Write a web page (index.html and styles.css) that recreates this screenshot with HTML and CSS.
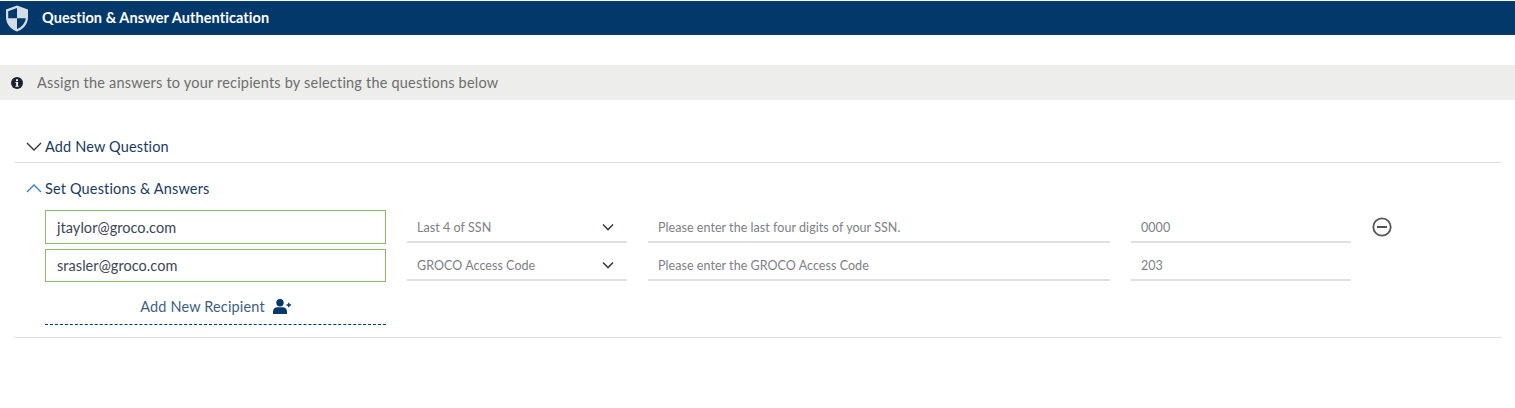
FILE: index.html
```html
<!DOCTYPE html>
<html lang="en">
<head>
  <meta charset="UTF-8" />
  <title>Question &amp; Answer Authentication</title>
  <link rel="stylesheet" href="styles.css">
</head>
<body>
  <header class="title-bar">
    <svg class="shield" viewBox="0 0 24 27" width="24" height="27">
      <path d="M12 0.500 L23 4.500 V12 C23 19 18.500 24 12 26.500 C5.500 24 1 19 1 12 V4.500 Z" fill="#d3dde8"/>
      <path d="M12 3 L3.200 6.200 V12 C3.200 12.400 3.200 12.800 3.250 13.300 H12 Z" fill="#03386b"/>
      <path d="M12 13.300 H20.750 C20.100 18.400 16.800 22 12 24 Z" fill="#03386b"/>
    </svg>
    <h1>Question &amp; Answer Authentication</h1>
  </header>

  <div class="info-bar">
    <svg class="info-icon" viewBox="0 0 12 12" width="12" height="12">
      <circle cx="6" cy="6" r="6" fill="#1c2230"/>
      <rect x="5" y="2.300" width="2" height="1.800" fill="#fff"/>
      <path d="M4.500 5 H7 V8.700 H7.800 V9.800 H4.400 V8.700 H5.200 V6.100 H4.500 Z" fill="#fff"/>
    </svg>
    <span>Assign the answers to your recipients by selecting the questions below</span>
  </div>

  <section class="accordion">
    <div class="panel">
      <div class="panel-head">
        <svg class="chevron" viewBox="0 0 16 9" width="16" height="9"><path d="M1 1 L8 8 L15 1" fill="none" stroke="#2b3038" stroke-width="1.300"/></svg>
        <span>Add New Question</span>
      </div>
    </div>

    <div class="panel open">
      <div class="panel-head">
        <svg class="chevron" viewBox="0 0 16 9" width="16" height="9"><path d="M1 8 L8 1 L15 8" fill="none" stroke="#2f7fd6" stroke-width="1.300"/></svg>
        <span>Set Questions &amp; Answers</span>
      </div>

      <div class="qa-grid">
        <div class="recipient first">jtaylor@groco.com</div>
        <div class="field select first">
          <span>Last 4 of SSN</span>
          <svg viewBox="0 0 12 8" width="12" height="8"><path d="M1 1.500 L6 6.500 L11 1.500" fill="none" stroke="#3a3f47" stroke-width="1.600"/></svg>
        </div>
        <div class="field first">Please enter the last four digits of your SSN.</div>
        <div class="field first">0000</div>
        <svg class="remove" viewBox="0 0 20 20" width="20" height="20">
          <circle cx="10" cy="10" r="8.700" fill="none" stroke="#555" stroke-width="1.800"/>
          <rect x="5" y="9" width="10" height="2" fill="#555"/>
        </svg>

        <div class="recipient">srasler@groco.com</div>
        <div class="field select">
          <span>GROCO Access Code</span>
          <svg viewBox="0 0 12 8" width="12" height="8"><path d="M1 1.500 L6 6.500 L11 1.500" fill="none" stroke="#3a3f47" stroke-width="1.600"/></svg>
        </div>
        <div class="field">Please enter the GROCO Access Code</div>
        <div class="field">203</div>
      </div>

      <div class="add-recipient">
        <span>Add New Recipient</span>
        <svg viewBox="0 0 18 15" width="18" height="15">
          <circle cx="7" cy="3.800" r="3.700" fill="#03386b"/>
          <path d="M0 15 V12.500 C0 9.800 2 8.300 4.500 8.300 H9.500 C12 8.300 14 9.800 14 12.500 V15 Z" fill="#03386b"/>
          <path d="M13.500 6 H18 M15.750 3.700 V8.300" stroke="#03386b" stroke-width="1.300"/>
        </svg>
      </div>
    </div>
  </section>
</body>
</html>
```

FILE: styles.css
```css
body {
  margin: 0;
  padding: 1px 0 0;
  background: white;
  font-family: 'Lato', 'Open Sans', sans-serif;
  color: #333;
}

.title-bar {
  display: flex;
  align-items: center;
  height: 34px;
  background-color: #03386b;
  padding-left: 5px;
}

.title-bar h1 {
  margin: 0 0 2px 13px;
  font-size: 14.500px;
  font-weight: 700;
  letter-spacing: 0.07px;
  color: white;
}

.info-bar {
  display: flex;
  align-items: center;
  height: 35px;
  margin-top: 30px;
  padding-left: 11px;
  background-color: #ededeb;
  font-size: 14.500px;
  letter-spacing: 0.2px;
  color: #6d6d6d;
}

.info-icon {
  margin-right: 14px;
}

.accordion {
  margin: 30px 13px 0 14px;
}

.panel {
  border-bottom: 1px solid #dedede;
  border-radius: 0 0 2px 2px;
  height: 33px;
  box-sizing: border-box;
}

.panel.open {
  height: 175px;
}

.panel-head {
  display: flex;
  align-items: center;
  height: 20px;
  padding-top: 6px;
  font-size: 14.500px;
  letter-spacing: 0.15px;
  color: #183a5e;
}

.panel.open .panel-head {
  padding-top: 15px;
}

.chevron {
  margin: 0 3px 0 12px;
}

.qa-grid {
  display: grid;
  grid-template-columns: 341px 220px 462px 220px 20px;
  column-gap: 21px;
  margin: 12px 0 0 31px;
}

.recipient {
  display: flex;
  align-items: center;
  box-sizing: border-box;
  height: 33px;
  margin-top: 5px;
  padding-left: 11px;
  border: 1px solid #8dbb63;
  font-size: 14.500px;
  letter-spacing: 0.05px;
  color: #3c4654;
}

.recipient.first {
  height: 34px;
  margin-top: 0;
}

.field {
  display: flex;
  align-items: center;
  justify-content: space-between;
  box-sizing: border-box;
  height: 32px;
  margin-top: 5px;
  padding: 2px 13px 0 10px;
  border-bottom: 2px solid #e0e0e0;
  font-size: 12.500px;
  letter-spacing: 0.05px;
  color: #7d8085;
}

.field.first {
  height: 33px;
  margin-top: 0;
  padding-top: 3px;
}

.remove {
  align-self: center;
}

.add-recipient {
  display: flex;
  align-items: center;
  justify-content: center;
  gap: 8px;
  box-sizing: border-box;
  width: 341px;
  height: 43px;
  margin-left: 31px;
  padding-top: 6px;
  border-bottom: 1px dashed #03386b;
  font-size: 14.500px;
  letter-spacing: 0.15px;
  color: #3f5f80;
}
```
